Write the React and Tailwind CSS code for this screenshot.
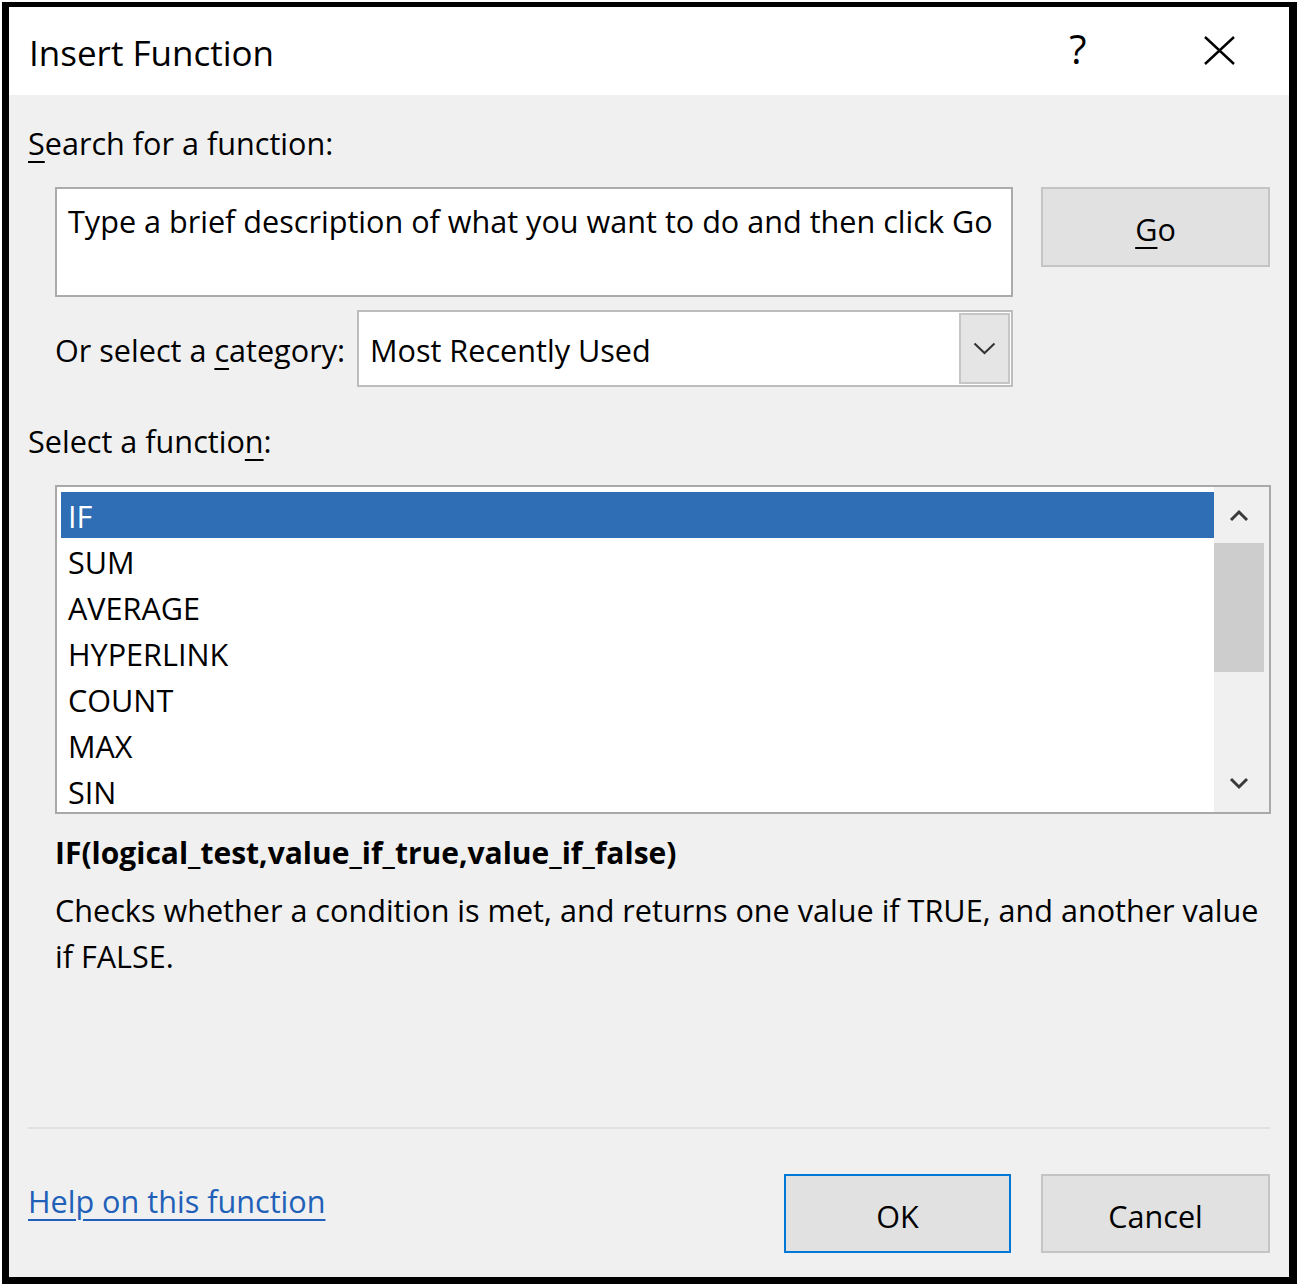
export default function App() {
  const items = ["SUM", "AVERAGE", "HYPERLINK", "COUNT", "MAX", "SIN"];
  return (
    <div className="w-[1299px] h-[1286px] bg-white pt-[2px] pl-[2px] font-['Open_Sans','Noto_Sans',sans-serif] text-black">
      <div className="w-[1295px] h-[1282px] border-black border-l-[7px] border-t-[5px] border-r-[8px] border-b-[7px] flex flex-col bg-[#f0f0f0] overflow-hidden">
        {/* Title bar */}
        <div className="h-[88px] shrink-0 bg-white flex items-start">
          <div className="pl-[20px] pt-[28px] text-[35px] leading-[35px]">Insert Function</div>
          <div className="flex-1" />
          <div className="w-[22px] pt-[22px] text-[40px] leading-[40px] text-center">?</div>
          <div className="ml-[115px] mr-[54px] mt-[29px]">
            <svg width="31" height="29" viewBox="0 0 31 29">
              <path d="M1 1 L30 28 M30 1 L1 28" stroke="#000" strokeWidth="2.4" fill="none" />
            </svg>
          </div>
        </div>

        {/* Body */}
        <div className="flex-1 flex flex-col pl-[19px] pr-[19px] text-[30.6px] leading-[46px]">
          <div className="pt-[25px]">
            <span className="underline underline-offset-[6px] decoration-[2px]">S</span>earch for a function:
          </div>

          <div className="mt-[21px] flex pl-[27px]">
            <div className="w-[958px] h-[110px] border-2 border-[#ababab] bg-white pl-[11px] pt-[9px] whitespace-nowrap">
              Type a brief description of what you want to do and then click Go
            </div>
            <div className="ml-[28px] w-[229px] h-[80px] bg-[#e1e1e1] border-2 border-[#c4c4c4] flex items-center justify-center pt-[3px]">
              <span>
                <span className="underline underline-offset-[6px] decoration-[2px]">G</span>o
              </span>
            </div>
          </div>

          <div className="mt-[13px] flex items-center pl-[27px] h-[77px]">
            <div className="w-[302px] pt-[3px] whitespace-nowrap">
              Or select a <span className="underline underline-offset-[6px] decoration-[2px]">c</span>ategory:
            </div>
            <div className="w-[656px] h-[77px] border-2 border-[#bdbdbd] bg-white flex items-center">
              <div className="flex-1 pl-[11px] pt-[3px]">Most Recently Used</div>
              <div className="mr-[1px] w-[51px] h-[71px] bg-[#e5e5e5] border-2 border-[#c6c6c6] flex items-center justify-center">
                <svg width="23" height="13" viewBox="0 0 23 13">
                  <path d="M1.5 1.5 L11.5 11 L21.5 1.5" stroke="#333" strokeWidth="2" fill="none" />
                </svg>
              </div>
            </div>
          </div>

          <div className="mt-[31px]">
            Select a functio<span className="underline underline-offset-[6px] decoration-[2px]">n</span>:
          </div>

          <div className="mt-[21px] ml-[27px] w-[1216px] h-[329px] border-2 border-[#a9a9a9] bg-white flex">
            <div className="flex-1 pt-[5px] pl-[4px] overflow-hidden">
              <div className="h-[46px] pl-[7px] pt-[1px] bg-[#2f6eb5] text-white">IF</div>
              {items.map((it) => (
                <div key={it} className="h-[46px] pl-[7px] pt-[1px]">{it}</div>
              ))}
            </div>
            <div className="w-[55px] bg-[#f0f0f0] flex flex-col">
              <div className="h-[56px] w-[50px] flex items-center justify-center">
                <svg width="20" height="13" viewBox="0 0 20 13">
                  <path d="M2 11 L10 3 L18 11" stroke="#3a3a3a" strokeWidth="3" fill="none" />
                </svg>
              </div>
              <div className="h-[129px] w-[50px] bg-[#cdcdcd]" />
              <div className="flex-1 w-[50px] flex items-end justify-center pb-[22px]">
                <svg width="20" height="13" viewBox="0 0 20 13">
                  <path d="M2 2 L10 10 L18 2" stroke="#3a3a3a" strokeWidth="3" fill="none" />
                </svg>
              </div>
            </div>
          </div>

          <div className="mt-[16px] pl-[27px] font-bold text-[30px] whitespace-nowrap">
            IF(logical_test,value_if_true,value_if_false)
          </div>
          <div className="mt-[11px] pl-[27px] whitespace-nowrap">
            Checks whether a condition is met, and returns one value if TRUE, and another value
            <br />
            if FALSE.
          </div>

          <div className="mt-[148px] h-[2px] bg-[#e0e0e0]" />

          <div className="mt-[45px] flex">
            <div className="pt-[4px]">
              <span className="text-[#2160b8] underline underline-offset-[6px] decoration-[2px]">Help on this function</span>
            </div>
            <div className="flex-1" />
            <div className="w-[227px] h-[79px] bg-[#e1e1e1] border-2 border-[#0078d7] flex items-center justify-center pt-[4px]">
              OK
            </div>
            <div className="ml-[30px] w-[229px] h-[79px] bg-[#e1e1e1] border-2 border-[#c4c4c4] flex items-center justify-center pt-[4px]">
              Cancel
            </div>
          </div>
        </div>
      </div>
    </div>
  );
}
